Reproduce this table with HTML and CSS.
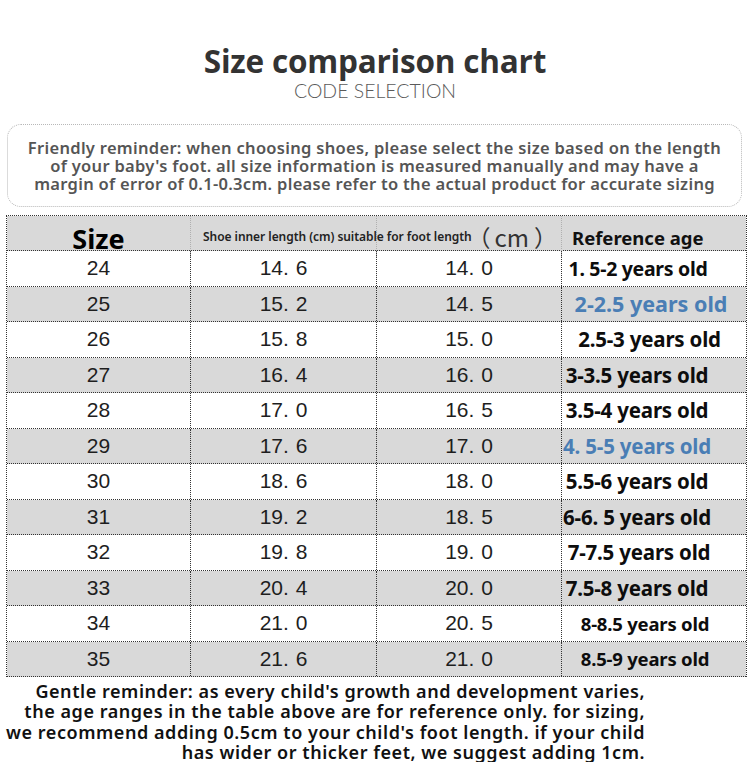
FILE: index.html
```html
<!DOCTYPE html>
<html lang="en">
<head>
<meta charset="utf-8">
<title>Size comparison chart</title>
<link rel="stylesheet" href="styles.css">
</head>
<body>
<header class="heading">
  <h1 class="heading__title">Size comparison chart</h1>
  <p class="heading__sub">CODE SELECTION</p>
</header>

<div class="notice">
  <p class="notice__text">Friendly reminder: when choosing shoes, please select the size based on the length<br>of your baby's foot. all size information is measured manually and may have a<br>margin of error of 0.1-0.3cm. please refer to the actual product for accurate sizing</p>
</div>

<div class="chart">
  <div class="row row--head">
    <div class="cell cell--size-head">Size</div>
    <div class="cell cell--inner-head">Shoe inner length (cm) suitable for foot length</div>
    <div class="cell cell--cm-head">（<span class="cm-unit">cm</span>）</div>
    <div class="cell cell--age-head">Reference age</div>
  </div>
  <div class="row">
    <div class="cell cell--num">24</div><div class="cell cell--num">14. 6</div><div class="cell cell--num">14. 0</div><div class="cell cell--age age--a">1. 5-2 years old</div>
  </div>
  <div class="row row--shade">
    <div class="cell cell--num">25</div><div class="cell cell--num">15. 2</div><div class="cell cell--num">14. 5</div><div class="cell cell--age age--blue age--b">2-2.5 years old</div>
  </div>
  <div class="row">
    <div class="cell cell--num">26</div><div class="cell cell--num">15. 8</div><div class="cell cell--num">15. 0</div><div class="cell cell--age age--c">2.5-3 years old</div>
  </div>
  <div class="row row--shade">
    <div class="cell cell--num">27</div><div class="cell cell--num">16. 4</div><div class="cell cell--num">16. 0</div><div class="cell cell--age">3-3.5 years old</div>
  </div>
  <div class="row">
    <div class="cell cell--num">28</div><div class="cell cell--num">17. 0</div><div class="cell cell--num">16. 5</div><div class="cell cell--age">3.5-4 years old</div>
  </div>
  <div class="row row--shade">
    <div class="cell cell--num">29</div><div class="cell cell--num">17. 6</div><div class="cell cell--num">17. 0</div><div class="cell cell--age age--blue">4. 5-5 years old</div>
  </div>
  <div class="row">
    <div class="cell cell--num">30</div><div class="cell cell--num">18. 6</div><div class="cell cell--num">18. 0</div><div class="cell cell--age">5.5-6 years old</div>
  </div>
  <div class="row row--shade">
    <div class="cell cell--num">31</div><div class="cell cell--num">19. 2</div><div class="cell cell--num">18. 5</div><div class="cell cell--age">6-6. 5 years old</div>
  </div>
  <div class="row">
    <div class="cell cell--num">32</div><div class="cell cell--num">19. 8</div><div class="cell cell--num">19. 0</div><div class="cell cell--age age--d">7-7.5 years old</div>
  </div>
  <div class="row row--shade">
    <div class="cell cell--num">33</div><div class="cell cell--num">20. 4</div><div class="cell cell--num">20. 0</div><div class="cell cell--age">7.5-8 years old</div>
  </div>
  <div class="row">
    <div class="cell cell--num">34</div><div class="cell cell--num">21. 0</div><div class="cell cell--num">20. 5</div><div class="cell cell--age age--narrow">8-8.5 years old</div>
  </div>
  <div class="row row--shade">
    <div class="cell cell--num">35</div><div class="cell cell--num">21. 6</div><div class="cell cell--num">21. 0</div><div class="cell cell--age age--narrow">8.5-9 years old</div>
  </div>
</div>

<p class="footnote">Gentle reminder: as every child's growth and development varies,<br>the age ranges in the table above are for reference only. for sizing,<br>we recommend adding 0.5cm to your child's foot length. if your child<br>has wider or thicker feet, we suggest adding 1cm.</p>
</body>
</html>
```

FILE: styles.css
```css
* { box-sizing: border-box; }

html, body {
  margin: 0;
  padding: 0;
  background: #ffffff;
}

body {
  width: 750px;
  font-family: "Noto Sans", "Open Sans", sans-serif;
  color: #111;
}

.heading {
  padding-top: 41px;
  text-align: center;
}

.heading__title {
  margin: 0;
  font-family: "Open Sans", "Noto Sans", sans-serif;
  font-weight: 700;
  font-size: 31.5px;
  line-height: 40px;
  color: #333333;
  letter-spacing: -0.2px;
}

.heading__sub {
  margin: 0;
  font-family: "Lato", "Liberation Sans", sans-serif;
  font-weight: 300;
  font-size: 19.5px;
  line-height: 20px;
  color: #5a5a5a;
}

.notice {
  margin: 23px 8px 0 7px;
  height: 83px;
  border: 1px dotted #b8b8b8;
  border-radius: 14px;
  display: flex;
  align-items: center;
  justify-content: center;
}

.notice__text {
  margin: 0;
  text-align: center;
  font-family: "Noto Sans", sans-serif;
  font-weight: 600;
  font-size: 16.5px;
  line-height: 18px;
  color: #555555;
  letter-spacing: 0.3px;
  white-space: nowrap;
}

.chart {
  margin: 8px 3px 0 6px;
  border: 1px dotted #333;
  border-bottom: none;
}

.row {
  display: grid;
  grid-template-columns: 183px 186px 185px 185px;
  height: 35.5px;
  border-bottom: 1px dotted #333;
  background: #ffffff;
}

.row--shade,
.row--head {
  background: #d9d9d9;
}

.row--head {
  height: 35px;
}

.cell {
  display: flex;
  align-items: center;
  justify-content: center;
  white-space: nowrap;
  border-left: 1px dotted #333;
}

.cell:first-child {
  border-left: none;
}

.row--head .cell {
  border-left-color: #b0b0b0;
}

.cell--size-head {
  font-family: "Noto Sans", sans-serif;
  font-weight: 700;
  font-size: 27px;
  color: #000;
  padding-top: 4px;
}

.cell--inner-head {
  justify-content: flex-start;
  padding-left: 12px;
  font-family: "Noto Sans", sans-serif;
  font-weight: 600;
  font-size: 12px;
  letter-spacing: -0.05px;
  color: #222;
  position: relative;
  z-index: 1;
}

.cell--cm-head {
  justify-content: flex-end;
  padding-right: 4px;
  font-family: "Noto Sans CJK SC", sans-serif;
  font-size: 23px;
  color: #333;
}

.cm-unit {
  margin: 0 5px 0 4px;
  font-size: 24px;
}

.cell--age-head {
  justify-content: flex-start;
  padding-left: 10px;
  font-family: "Noto Sans", sans-serif;
  font-weight: 700;
  font-size: 18.5px;
  color: #111;
  padding-top: 2px;
}

.cell--num {
  font-family: "Liberation Sans", Arial, sans-serif;
  font-size: 21px;
  color: #1e1e1e;
  word-spacing: 1px;
}

.cell--age {
  padding-right: 34px;
  font-family: "Noto Sans", sans-serif;
  font-weight: 700;
  font-size: 20.5px;
  color: #0d0d0d;
  letter-spacing: -0.2px;
}

.age--blue {
  color: #4a7eb5;
}

.age--a {
  padding-right: 32px;
  font-size: 19.5px;
  letter-spacing: -0.3px;
}

.age--b {
  padding-right: 6px;
  font-size: 21.5px;
  letter-spacing: 0;
}

.age--c {
  padding-right: 9px;
}

.age--d {
  padding-right: 30px;
}

.age--narrow {
  padding-right: 18px;
  font-size: 18.5px;
  letter-spacing: -0.2px;
}

.footnote {
  margin: 4px 0 0 0;
  width: 645px;
  text-align: right;
  font-family: "Noto Sans", sans-serif;
  font-weight: 600;
  font-size: 18px;
  line-height: 20.3px;
  color: #111;
  letter-spacing: 0.55px;
  white-space: nowrap;
}
```
